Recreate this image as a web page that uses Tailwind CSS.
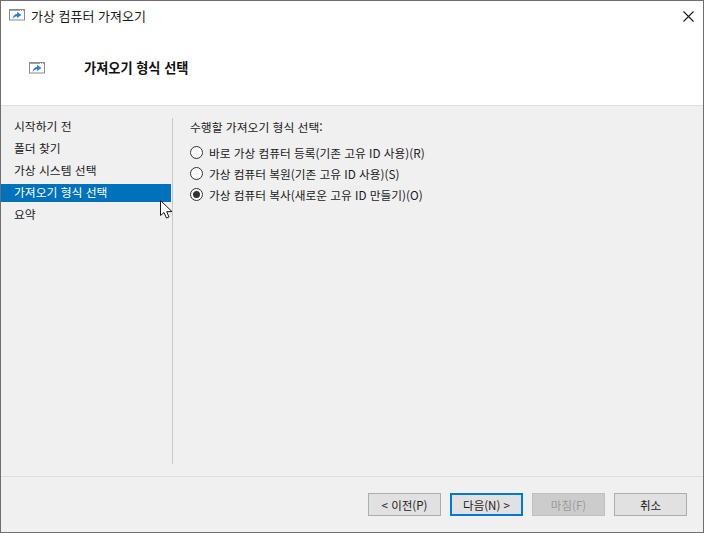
<!DOCTYPE html>
<html lang="ko"><head><meta charset="utf-8">
<script src="https://cdn.jsdelivr.net/npm/@tailwindcss/browser@4"></script>
</head>
<body class="m-0 bg-white">
<div class="relative w-[704px] h-[533px] flex flex-col border border-[#6e6e6e] bg-white overflow-hidden text-[12px] leading-[16px] text-[#1a1a1a] font-['Noto_Sans_CJK_KR','Noto_Sans',sans-serif]">
  <div class="h-[104px] shrink-0 bg-white flex flex-col">
    <div class="h-[30px] flex items-center pl-[8px] pr-[9px] gap-[6px]">
      <svg class="mb-[2px]" width="16" height="12" viewBox="0 0 16 12"><rect x="0.5" y="0.5" width="15" height="10.5" fill="#fff" stroke="#8c8c8c"/><rect x="1" y="1" width="14" height="1" fill="#a0a0a0"/><rect x="11" y="1" width="1" height="1" fill="#fff"/><rect x="13" y="1" width="1" height="1" fill="#fff"/><path d="M3.5 10 C3.8 7 5.8 5 8 5 V2.8 L12.5 6 L8 9 V7.2 C6.5 7.2 5 8 3.5 10Z" fill="#2f7fd6"/></svg>
      <span class="text-[13px]">가상 컴퓨터 가져오기</span>
      <svg class="ml-auto" width="11" height="11" viewBox="0 0 11 11"><path d="M0.5 0.5 L10.5 10.5 M10.5 0.5 L0.5 10.5" stroke="#1a1a1a" stroke-width="1.1"/></svg>
    </div>
    <div class="flex items-center pl-[28px] mt-[23px] h-[28px]">
      <svg class="-mt-[1px]" width="16" height="12" viewBox="0 0 16 12"><rect x="0.5" y="0.5" width="15" height="10.5" fill="#fff" stroke="#8c8c8c"/><rect x="1" y="1" width="14" height="1" fill="#a0a0a0"/><rect x="11" y="1" width="1" height="1" fill="#fff"/><rect x="13" y="1" width="1" height="1" fill="#fff"/><path d="M3.5 10 C3.8 7 5.8 5 8 5 V2.8 L12.5 6 L8 9 V7.2 C6.5 7.2 5 8 3.5 10Z" fill="#2f7fd6"/></svg>
      <span class="ml-[39px] text-[13.2px] font-bold text-[#111]">가져오기 형식 선택</span>
    </div>
  </div>
  <div class="flex-1 flex flex-col bg-[#f0f0f0] border-t border-[#dedede]">
    <div class="h-[370px] shrink-0 flex">
      <nav class="w-[171px] shrink-0 pt-[10px] flex flex-col text-[11.8px]">
        <div class="h-[22px] flex items-center pl-[13px] pb-[2px]">시작하기 전</div>
        <div class="h-[22px] flex items-center pl-[13px] pb-[2px]">폴더 찾기</div>
        <div class="h-[22px] flex items-center pl-[13px] pb-[2px]">가상 시스템 선택</div>
        <div class="h-[18px] mt-[2px] mb-[2px] mr-[1px] flex items-center pl-[13px] pb-[2px] bg-[#0072bc] text-white">가져오기 형식 선택</div>
        <div class="h-[22px] flex items-center pl-[13px] pb-[2px]">요약</div>
      </nav>
      <div class="w-px bg-[#c8c8c8] my-[12px]"></div>
      <main class="flex-1 pl-[17px] pt-[13px] text-[11.8px]">
        <div class="h-[16px] flex items-center">수행할 가져오기 형식 선택:</div>
        <div class="mt-[7px] flex flex-col text-[11.7px]">
          <label class="h-[21px] flex items-center gap-[6px]"><span class="w-[13px] h-[13px] rounded-full border border-[#333] bg-white"></span>바로 가상 컴퓨터 등록(기존 고유 ID 사용)(R)</label>
          <label class="h-[21px] flex items-center gap-[6px]"><span class="w-[13px] h-[13px] rounded-full border border-[#333] bg-white"></span>가상 컴퓨터 복원(기존 고유 ID 사용)(S)</label>
          <label class="h-[21px] flex items-center gap-[6px]"><span class="w-[13px] h-[13px] rounded-full border border-[#333] bg-white flex items-center justify-center"><span class="w-[7px] h-[7px] rounded-full bg-[#333]"></span></span>가상 컴퓨터 복사(새로운 고유 ID 만들기)(O)</label>
        </div>
      </main>
    </div>
    <div class="h-px bg-[#dedede]"></div>
    <footer class="flex-1 flex justify-end pt-[16px] pr-[16px] gap-[9px] text-[11.5px]">
      <button class="w-[73px] h-[23px] flex items-center justify-center border border-[#adadad] bg-[#e1e1e1] text-[#1a1a1a]">&lt; 이전(P)</button>
      <button class="w-[73px] h-[23px] flex items-center justify-center border-2 border-[#0078d7] bg-[#e1e1e1] text-[#1a1a1a]">다음(N) &gt;</button>
      <button class="w-[73px] h-[23px] flex items-center justify-center border border-[#bfbfbf] bg-[#cccccc] text-[#9a9a9a]">마침(F)</button>
      <button class="w-[73px] h-[23px] flex items-center justify-center border border-[#adadad] bg-[#e1e1e1] text-[#1a1a1a]">취소</button>
    </footer>
  </div>
  <svg class="absolute left-[159px] top-[199px]" width="14" height="20" viewBox="0 0 14 20"><path d="M0.5 0.5 V15.5 L4 12.5 L6.5 18 L9 17 L6.7 11.6 H12 Z" fill="#fff" stroke="#1a1a1a" stroke-width="1"/></svg>
</div>
</body></html>
